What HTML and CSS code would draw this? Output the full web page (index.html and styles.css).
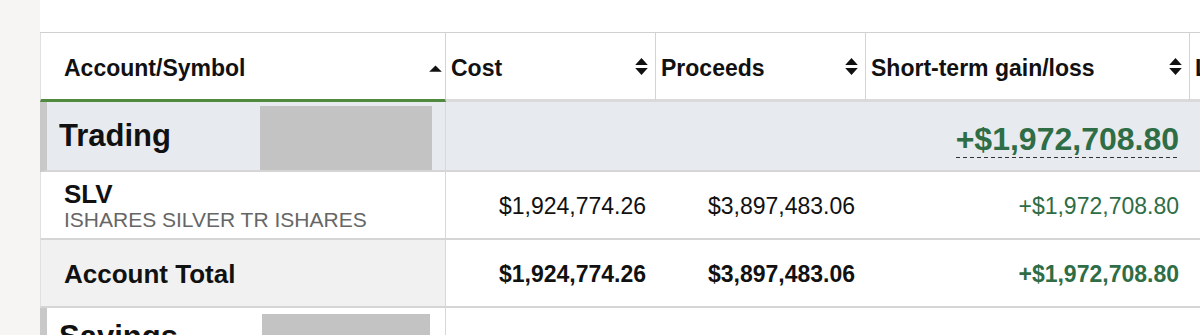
FILE: index.html
```html
<!DOCTYPE html>
<html lang="en">
<head>
<meta charset="utf-8">
<title>Realized gain/loss</title>
<link rel="stylesheet" href="styles.css">
</head>
<body>
<div class="page">
  <div class="tbl">
    <div class="row head">
      <div class="cell c1"><span class="htext">Account/Symbol</span>
        <svg class="sort-up" width="13" height="7" viewBox="0 0 13 7"><path d="M6.5 0.5 L12.8 6.8 H0.2 Z"/></svg></div>
      <div class="cell"><span class="htext">Cost</span>
        <svg class="sort" width="13" height="17" viewBox="0 0 13 17"><path d="M6.5 0 L12.8 7 H0.2 Z M6.5 17 L12.8 10 H0.2 Z"/></svg></div>
      <div class="cell"><span class="htext">Proceeds</span>
        <svg class="sort" width="13" height="17" viewBox="0 0 13 17"><path d="M6.5 0 L12.8 7 H0.2 Z M6.5 17 L12.8 10 H0.2 Z"/></svg></div>
      <div class="cell"><span class="htext">Short-term gain/loss</span>
        <svg class="sort" width="13" height="17" viewBox="0 0 13 17"><path d="M6.5 0 L12.8 7 H0.2 Z M6.5 17 L12.8 10 H0.2 Z"/></svg></div>
      <div class="cell"><span class="htext">Long-term gain/loss</span></div>
    </div>

    <div class="row body group active">
      <div class="cell c1"><span class="acct">Trading</span><span class="redact"></span></div>
      <div class="cell"></div>
      <div class="cell"></div>
      <div class="cell num big-cell"><span class="gain big">+$1,972,708.80</span></div>
      <div class="cell"></div>
    </div>

    <div class="row body item">
      <div class="cell c1 stack"><span class="sym">SLV</span><span class="desc">ISHARES SILVER TR ISHARES</span></div>
      <div class="cell num">$1,924,774.26</div>
      <div class="cell num">$3,897,483.06</div>
      <div class="cell num"><span class="gain">+$1,972,708.80</span></div>
      <div class="cell"></div>
    </div>

    <div class="row body total">
      <div class="cell c1"><span class="tlabel">Account Total</span></div>
      <div class="cell num">$1,924,774.26</div>
      <div class="cell num">$3,897,483.06</div>
      <div class="cell num"><span class="gain">+$1,972,708.80</span></div>
      <div class="cell"></div>
    </div>

    <div class="row body group savings">
      <div class="cell c1"><span class="acct">Savings</span><span class="redact"></span></div>
      <div class="cell"></div>
      <div class="cell"></div>
      <div class="cell"></div>
      <div class="cell"></div>
    </div>
  </div>
</div>
</body>
</html>
```

FILE: styles.css
```css
html, body {
  margin: 0;
  height: 100%;
}

body {
  background: #f6f5f3;
  font-family: "Liberation Sans", Arial, Helvetica, sans-serif;
  color: #111;
  overflow: hidden;
}

.page {
  margin-left: 40px;
  background: #fff;
  padding-top: 32px;
  min-height: 100vh;
  overflow: hidden;
}

.tbl {
  width: 1300px;
  border-top: 1px solid #d0d0d0;
}

.row {
  display: grid;
  grid-template-columns: 406px 210px 210px 324px 150px;
}

.cell {
  box-sizing: border-box;
  display: flex;
  align-items: center;
  min-width: 0;
  white-space: nowrap;
}

/* header */
.head .cell {
  height: 69px;
  border-bottom: 3px solid #dadada;
  border-right: 1px solid #d3d3d3;
  padding: 0 7px 0 5px;
  justify-content: space-between;
  font-weight: bold;
  font-size: 23px;
}

.head .c1 {
  border-left: 1px solid #e0e0e0;
  border-bottom-color: #4f8a3f;
  padding-left: 23px;
  padding-right: 3px;
}

.htext {
  padding-top: 4px;
}

.sort, .sort-up {
  fill: #111;
  flex: none;
}

.sort-up {
  margin-top: 4px;
}

/* body rows */
.body .cell {
  border-bottom: 2px solid #d5d5d5;
}

.body .c1 {
  border-right: 1px solid #d8d8d8;
  border-left: 1px solid #e0e0e0;
  padding-left: 23px;
}

.group .cell {
  height: 70px;
}

.item .cell,
.total .cell {
  height: 68px;
}

.group .c1 {
  border-left: 7px solid #c8c8c8;
  padding-left: 12px;
}

.active .cell {
  background: #e7ebef;
}

.acct {
  font-size: 31px;
  font-weight: bold;
}

.redact {
  margin-left: auto;
  margin-right: 13px;
  width: 172px;
  height: 64px;
  align-self: flex-end;
  background: #c3c3c3;
}

.savings .acct {
  align-self: flex-start;
  margin-top: 13px;
  line-height: 31px;
}

.savings .redact {
  align-self: flex-start;
  margin-top: 6px;
  margin-right: 15px;
  width: 168px;
}

.num {
  justify-content: flex-end;
  padding-right: 10px;
  padding-top: 2px;
  font-size: 23px;
}

.num:nth-child(3),
.num:nth-child(4) {
  padding-right: 11px;
}

.gain {
  color: #2e6d45;
}

.big-cell {
  padding-top: 9px;
}

.gain.big {
  display: inline-block;
  font-size: 32px;
  font-weight: bold;
  line-height: 32px;
  padding-bottom: 3px;
  background-image: linear-gradient(to right, #333 0, #333 4px, transparent 4px);
  background-size: 7px 1px;
  background-repeat: repeat-x;
  background-position: left bottom;
}

.stack {
  flex-direction: column;
  align-items: flex-start;
  justify-content: center;
}

.sym {
  font-size: 26px;
  font-weight: bold;
  line-height: 26px;
}

.desc {
  font-size: 21px;
  line-height: 21px;
  color: #666;
  margin-top: 2px;
}

.total .c1 {
  background: #f1f1f1;
  padding-top: 2px;
}

.tlabel {
  font-size: 26px;
  font-weight: bold;
}

.total .num {
  font-weight: bold;
}
```
